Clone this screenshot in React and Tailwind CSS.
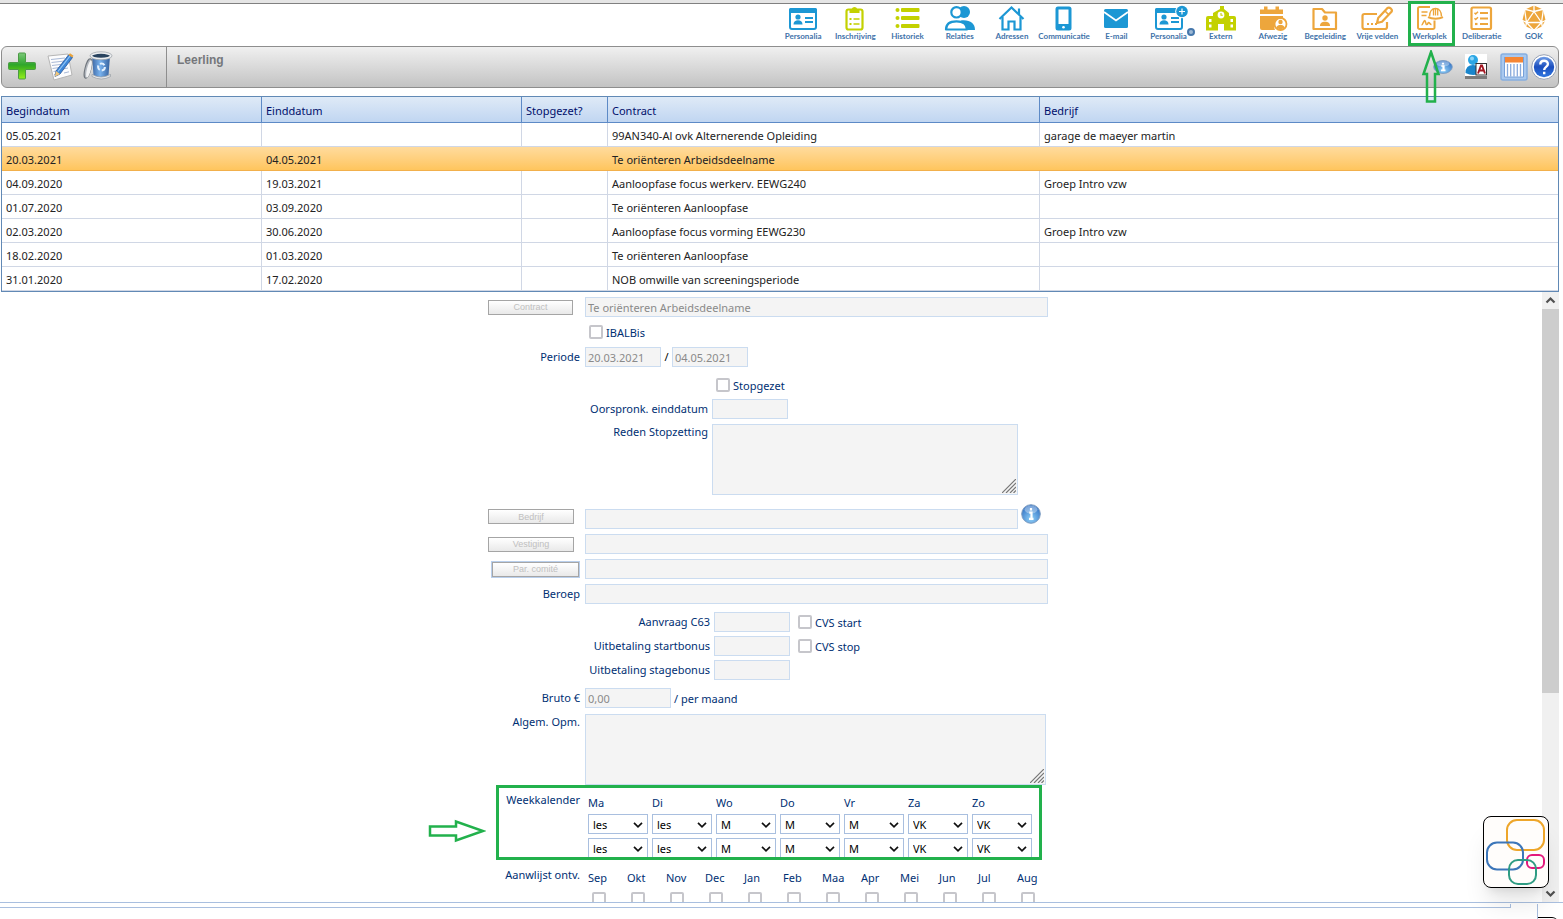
import React from "react";

const BLUE = "#1c97d4";
const LIME = "#c3d100";
const ORANGE = "#eda63c";

function CardIcon({ plus }) {
  return (
    <>
      <rect x="3" y="5" width="26" height="20" rx="2" fill="none" stroke={BLUE} strokeWidth="2" />
      <rect x="2" y="4" width="28" height="5" rx="1.5" fill={BLUE} />
      <circle cx="11" cy="13" r="2.6" fill={BLUE} />
      <path d="M6.5 20.5c0-3 2-4.2 4.500-4.200s4.500 1.200 4.500 4.200z" fill={BLUE} />
      <path d="M18 14h8M18 18h8" stroke={BLUE} strokeWidth="2" />
      {plus && (
        <>
          <circle cx="29" cy="7.500" r="6.800" fill="#fff" />
          <circle cx="29" cy="7.500" r="5.800" fill={BLUE} />
          <path d="M29 4.500v6M26 7.500h6" stroke="#fff" strokeWidth="1.200" />
        </>
      )}
    </>
  );
}

const ICONS = {
  card: <CardIcon />,
  cardPlus: <CardIcon plus />,
  clipboard: (
    <g fill="none" stroke={LIME} strokeWidth="2.200">
      <rect x="7.500" y="5.500" width="16" height="20" rx="2" />
      <path d="M10.500 5h2.300a2.800 2.800 0 0 1 5.400 0h2.300v4H10.500z" fill={LIME} stroke="none" />
      <path d="M14.500 15h6M14.500 20h6" strokeWidth="1.600" />
      <path d="M10.500 15h2M10.500 20h2" strokeWidth="2" />
    </g>
  ),
  list: (
    <g fill={LIME}>
      {[4, 12, 20].map((y) => (
        <g key={y}>
          <circle cx="5.500" cy={y + 2} r="2" />
          <rect x="9" y={y} width="18.500" height="4" rx="1" />
        </g>
      ))}
    </g>
  ),
  people: (
    <g>
      <g fill={BLUE}>
        <circle cx="20" cy="8" r="6" />
        <path d="M17 16.500c8.500-1 14 2.500 14 9.500h-12z" />
      </g>
      <g fill="#fff" stroke={BLUE} strokeWidth="2.200">
        <circle cx="12.500" cy="8.300" r="5.200" />
        <path d="M2 25.500c0-6 4.500-8.200 10.500-8.200S23 19.500 23 25.500z" strokeLinejoin="round" />
      </g>
    </g>
  ),
  home: (
    <g fill="none" stroke={BLUE} strokeWidth="2.200">
      <path d="M3.500 15 15.500 3.500 27.500 15M23 10V4.500" />
      <path d="M6.500 13v12.500H12.500v-8h6v8h6V13" />
    </g>
  ),
  phone: (
    <g>
      <rect x="7.500" y="2.500" width="16" height="24" rx="2.500" fill={BLUE} />
      <rect x="10.500" y="5.500" width="10" height="14.500" fill="#fff" />
      <circle cx="15.500" cy="23.200" r="1.300" fill="#fff" />
    </g>
  ),
  mail: (
    <g>
      <rect x="4" y="5" width="24" height="19" rx="1.500" fill={BLUE} />
      <path d="m4 8 12 8.500L28 8" fill="none" stroke="#fff" strokeWidth="1.800" />
    </g>
  ),
  school: (
    <g>
      <path d="M1 13a2 2 0 0 1 2-2h5V8l7-4V1h4v3l5 4v3h5a2 2 0 0 1 2 2v12.500H1z" fill={LIME} transform="translate(0 1)" />
      <circle cx="16" cy="11" r="3.400" fill="#fff" />
      <path d="M16 9v2.300h1.800" fill="none" stroke={LIME} strokeWidth="1.100" />
      <path d="M13 27v-7h6v7zM4 15h2.500v3H4zM4 20.500h2.500v3H4zM25.500 15H28v3h-2.500zM25.500 20.500H28v3h-2.500z" fill="#fff" />
    </g>
  ),
  calendarUser: (
    <g>
      <path d="M3 5.500h4V2.500h3.500v3h8v-3H22v3h4V10H3zM3 12h23v2.500a8 8 0 0 0-8 11.500H5a2 2 0 0 1-2-2z" fill={ORANGE} />
      <circle cx="23.500" cy="20" r="6" fill="#fff" stroke={ORANGE} strokeWidth="1.800" />
      <circle cx="23.500" cy="18" r="2.200" fill={ORANGE} />
      <path d="M19.500 23.500c.5-2 2-2.500 4-2.500s3.500.5 4 2.500c-2 2-6 2-8 0z" fill={ORANGE} />
    </g>
  ),
  folderUser: (
    <g>
      <path d="M4.500 25V5h8.500l3 3.500h11V25z" fill="none" stroke={ORANGE} strokeWidth="2.200" strokeLinejoin="round" />
      <circle cx="16" cy="14" r="2.700" fill={ORANGE} />
      <path d="M11 22c0-3.200 2-4.200 5-4.200s5 1 5 4.200z" fill={ORANGE} />
    </g>
  ),
  fieldPen: (
    <g fill="none" stroke={ORANGE} strokeWidth="2.200" strokeLinejoin="round">
      <path d="M16 10H3.500a2 2 0 0 0-2 2v11a2 2 0 0 0 2 2H24a2 2 0 0 0 2-2v-5" />
      <path d="m16 19 1.200-5L26.500 4c2-1.500 5.500 1.500 4 3.800L21 17.800z" />
      <path d="m23.500 6.500 4.300 4.300" strokeWidth="1.600" />
      <path d="M6 20h2M10 20h2M14 20h2" strokeWidth="2" />
    </g>
  ),
  workplace: (
    <g fill="none" stroke={ORANGE} strokeWidth="2">
      <path d="M16 3H5.500A1.500 1.500 0 0 0 4 4.500v19A1.500 1.500 0 0 0 5.500 25H19a1.500 1.500 0 0 0 1.500-1.500V16.500" />
      <path d="M7.500 8h6M7.500 11.500h5" strokeWidth="1.600" />
      <path d="M7.500 21c1.500 0 2-4.500 3.200-4.500s.6 4 2 4 1-2 2-2 1 2 2.800 2" strokeWidth="1.600" />
      <path d="M15.500 12.500C15.500 7.500 18 4.500 21.500 4.500s6 3 6 8" strokeWidth="1.500" />
      <path d="M19.500 5v6.500M21.500 4v7.500M23.700 5v6.500" strokeWidth="1.300" />
      <path d="M14 13.200c4 2 11 2 15 0" strokeWidth="1.900" />
    </g>
  ),
  checklist: (
    <g fill="none" stroke={ORANGE} strokeWidth="2.200">
      <rect x="5.500" y="3.500" width="19.500" height="21.500" rx="1.500" />
      <path d="M14 9h8M14 14.500h8M14 20h8" strokeWidth="2" />
      <path d="m8.500 8.800 1.200 1.200 2.300-2.300M8.500 14.300l1.200 1.200 2.300-2.300" strokeWidth="1.500" />
      <path d="M9 20h2.500" strokeWidth="2.200" />
    </g>
  ),
  polyhedron: (
    <g>
      <path d="M16 1.500 25 5.500 27.500 16 24 22.500 16 26 8 22.500 4.500 16 7 5.500z" fill={ORANGE} />
      <path d="M16 1v6.500L8.500 18.500h15L16 7.500 6 5M16 7.500 26 5M8.500 18.500 6.500 5M23.500 18.500l2-13.500M8.500 18.500 3.500 16M23.500 18.500l5-2.500M8.500 18.500l-1 5M23.500 18.500l1 5M8.500 18.500 16 26.500l7.500-8" fill="none" stroke="#fff" strokeWidth="1.300" />
    </g>
  ),
};

const NAV = [
  ["Personalia", "card"],
  ["Inschrijving", "clipboard"],
  ["Historiek", "list"],
  ["Relaties", "people"],
  ["Adressen", "home"],
  ["Communicatie", "phone"],
  ["E-mail", "mail"],
  ["Personalia", "cardPlus", true],
  ["Extern", "school"],
  ["Afwezig", "calendarUser"],
  ["Begeleiding", "folderUser"],
  ["Vrije velden", "fieldPen"],
  ["Werkplek", "workplace"],
  ["Deliberatie", "checklist"],
  ["GOK", "polyhedron"],
];

function TopNav() {
  return (
    <nav className="flex h-[42px] shrink-0 justify-end pr-[3px]">
      <div className="flex w-[783px]">
        {NAV.map(([label, icon, badge], i) => (
          <a key={i} href="#" className="relative flex min-w-0 flex-1 flex-col items-center">
            <svg viewBox="0 0 32 28" className="h-7 w-8 shrink-0 overflow-visible">{ICONS[icon]}</svg>
            <span className="relative font-[Lato,'Open_Sans',sans-serif] text-[8px] leading-[8px] font-bold whitespace-nowrap text-[#3f73aa]">
              {label}
              {badge && (
                <span className="absolute -top-1 -right-2 h-2 w-2 rounded-full border-2 border-[#4678ac] bg-[#9db8d4]" />
              )}
            </span>
            {label === "Werkplek" && (
              <>
                <span className="absolute -top-[3px] right-px bottom-0 left-[5px] border-[3px] border-[#22b14c]" />
                <svg viewBox="0 0 20 54" className="absolute top-[46px] left-[18px] z-10 h-[54px] w-5">
                  <path d="M10 2 17.500 24H14V51.500H6V24H2.500z" fill="none" stroke="#22b14c" strokeWidth="2.500" />
                </svg>
              </>
            )}
          </a>
        ))}
      </div>
    </nav>
  );
}

function InfoIcon({ className }) {
  return (
    <svg viewBox="0 0 20 20" className={className} preserveAspectRatio="none">
      <defs>
        <radialGradient id="info" cx="50%" cy="75%" r="70%">
          <stop offset="0" stopColor="#8fd0f8" />
          <stop offset="1" stopColor="#3272c4" />
        </radialGradient>
      </defs>
      <circle cx="10" cy="10" r="9.300" fill="url(#info)" stroke="#7d9cc0" />
      <ellipse cx="10" cy="5.500" rx="6.500" ry="4" fill="#fff" opacity=".35" />
      <path d="M10 4v2.500M8.300 8.700H10.500v5.800M8 14.800h4.500" stroke="#fff" strokeWidth="2.200" fill="none" />
    </svg>
  );
}

function Toolbar() {
  return (
    <header className="mr-1 ml-px flex h-[42px] shrink-0 items-stretch rounded-md border border-[#8e8e8e] bg-linear-to-b from-[#f0f0f0] to-[#c3c3c3]">
      <div className="flex w-[165px] items-center gap-2 border-r border-[#8e8e8e] pb-[2px] pl-[5px]">
        <button type="button" aria-label="Toevoegen">
          <svg viewBox="0 0 30 30" className="h-[30px] w-[30px]">
            <defs>
              <linearGradient id="add" x1="0" y1="0" x2="0" y2="1">
                <stop offset="0" stopColor="#7cc87a" />
                <stop offset=".45" stopColor="#2fa62c" />
                <stop offset=".55" stopColor="#3fb31f" />
                <stop offset="1" stopColor="#94f01c" />
              </linearGradient>
            </defs>
            <path d="M12.500 2h5q1 0 1 1v8.500h9q1 0 1 1v5q0 1-1 1h-9V27q0 1-1 1h-5q-1 0-1-1v-8.500h-9q-1 0-1-1v-5q0-1 1-1h9V3q0-1 1-1z" fill="url(#add)" stroke="#4b9b45" />
          </svg>
        </button>
        <button type="button" aria-label="Bewerken">
          <svg viewBox="0 0 30 30" className="h-[30px] w-[30px]">
            <path d="m3 5 20-2 4 21-18 5z" fill="#fcfcfd" stroke="#b5b5b5" />
            <path d="m6 8.500 14-1.500M6.500 11.500l13-1.500M7 14.500l10-1.200M7.500 17.500l7-1M8.500 20.500l4-.8M9 23.500l3-.6M19 22l5-1.200M18 18l5-1" stroke="#a9b9d6" />
            <path d="m11 20 12.500-16 4 2.500L15 23l-5 2.500z" fill="#3c86d8" stroke="#2a579b" strokeWidth=".8" />
            <path d="m13 20.500 12-15.500" stroke="#96c7f6" strokeWidth="1.200" />
            <path d="m11 20 4 3-5.200 2.700z" fill="#f0c67c" />
            <path d="m23.500 4 1.500-1.800 3.500 2.500-1.200 1.800z" fill="#e9a33a" />
          </svg>
        </button>
        <button type="button" aria-label="Verwijderen">
          <svg viewBox="0 0 30 30" className="h-[30px] w-[30px]">
            <defs>
              <linearGradient id="bin" x1="0" x2="1">
                <stop offset="0" stopColor="#3d68a5" />
                <stop offset=".45" stopColor="#78b2ee" />
                <stop offset="1" stopColor="#34609d" />
              </linearGradient>
            </defs>
            <path d="M9 5h18l-1.500 19q-7.500 4-15 0z" fill="url(#bin)" />
            <path d="M9 23.500q9 5 18.500 0v2q-9 5-18.500 0z" fill="#e5e8ec" stroke="#8a9097" strokeWidth=".6" />
            <ellipse cx="18" cy="4.800" rx="9.800" ry="3" fill="#29435f" stroke="#eceef0" strokeWidth="2" />
            <ellipse cx="18" cy="4.800" rx="11" ry="4" fill="none" stroke="#8a9097" strokeWidth=".6" />
            <circle cx="18.500" cy="16" r="3.400" fill="none" stroke="#e3f1ff" strokeWidth="2" strokeDasharray="5 2" />
            <ellipse cx="5" cy="17.500" rx="3" ry="10" transform="rotate(14 5 17.500)" fill="#b3b8bf" stroke="#6f757c" strokeWidth="1" />
            <ellipse cx="6" cy="18" rx="2" ry="9" transform="rotate(14 6 18)" fill="#f1f2f3" />
          </svg>
        </button>
      </div>
      <h1 className="flex-1 pt-[5px] pl-[10px] font-['Liberation_Sans',Arial,sans-serif] text-[12px] leading-4 font-bold text-[#75777b]">Leerling</h1>
      <div className="flex items-center">
        <button type="button" aria-label="Info" className="mr-[11px]">
          <InfoIcon className="h-[14px] w-5" />
        </button>
        <button type="button" aria-label="Leerlinggegevens" className="mr-3">
          <svg viewBox="0 0 24 26" className="h-[26px] w-6">
            <rect x="1" width="22" height="23" fill="#fff" />
            <rect x="1" y="22" width="22" height="3" fill="#7b7b7b" />
            <circle cx="9" cy="6" r="5" fill="#2ba6e4" />
            <path d="M1.500 19q0-8 7.500-8t7.500 8q-7 4-15 0z" fill="#1a86cc" />
            <circle cx="8" cy="4.500" r="2" fill="#8bd4f7" />
            <rect x="12" y="9.500" width="10.500" height="11.500" fill="#fff" stroke="#333" />
            <path d="m14 19.500 3-8h1l3 8M15.300 16.500h4.500" fill="none" stroke="#a31621" strokeWidth="1.900" />
          </svg>
        </button>
        <button type="button" aria-label="Kalender" className="mr-[3px]">
          <svg viewBox="0 0 28 28" className="h-7 w-7">
            <rect x="1" y="1" width="26" height="26" rx="2" fill="#a8c8ef" stroke="#86aee0" strokeWidth="1.500" />
            <rect x="4" y="4" width="20" height="20" fill="#fff" />
            <rect x="4" y="4" width="20" height="5.500" fill="#f58634" />
            <path d="M7.500 11v12.500M10.700 11v12.500M14 11v12.500M17.300 11v12.500M20.500 11v12.500" stroke="#8aabdc" strokeWidth="1.300" />
            <path d="M4.500 4v20h19V4" fill="none" stroke="#77a0d8" />
          </svg>
        </button>
        <button type="button" aria-label="Help" className="mr-px">
          <svg viewBox="0 0 26 26" className="h-[26px] w-[26px]">
            <defs>
              <linearGradient id="help" x1="0" y1="0" x2="0" y2="1">
                <stop offset="0" stopColor="#6d9be6" />
                <stop offset=".5" stopColor="#1c4fbe" />
                <stop offset="1" stopColor="#2f76e0" />
              </linearGradient>
            </defs>
            <circle cx="13" cy="13" r="12.300" fill="#fff" stroke="#96a0b4" />
            <circle cx="13" cy="13" r="10.200" fill="url(#help)" />
            <path d="M9.300 10.500c0-5 7.600-4.800 7.600-.5 0 3-3.700 2.800-3.700 6M13.200 17.800v2.500" fill="none" stroke="#fff" strokeWidth="2.400" />
          </svg>
        </button>
      </div>
    </header>
  );
}

const ROWS = [
  ["05.05.2021", "", "", "99AN340-Al ovk Alternerende Opleiding", "garage de maeyer martin"],
  ["20.03.2021", "04.05.2021", "", "Te oriënteren Arbeidsdeelname", ""],
  ["04.09.2020", "19.03.2021", "", "Aanloopfase focus werkerv. EEWG240", "Groep Intro vzw"],
  ["01.07.2020", "03.09.2020", "", "Te oriënteren Aanloopfase", ""],
  ["02.03.2020", "30.06.2020", "", "Aanloopfase focus vorming EEWG230", "Groep Intro vzw"],
  ["18.02.2020", "01.03.2020", "", "Te oriënteren Aanloopfase", ""],
  ["31.01.2020", "17.02.2020", "", "NOB omwille van screeningsperiode", ""],
];

function ContractTable() {
  return (
    <div className="mt-2 mr-1 ml-px shrink-0 border border-[#6189b5]">
      <table className="w-full table-fixed border-separate border-spacing-0 text-left">
        <colgroup>
          <col className="w-[260px]" />
          <col className="w-[260px]" />
          <col className="w-[86px]" />
          <col className="w-[432px]" />
          <col />
        </colgroup>
        <thead>
          <tr className="h-[26px] bg-linear-to-b from-[#dfeaf7] to-[#bfd5f1]">
            {["Begindatum", "Einddatum", "Stopgezet?", "Contract", "Bedrijf"].map((h) => (
              <th key={h} scope="col" className="border-r border-b border-[#5d8ac6] px-1 pt-[3px] pb-0 font-normal text-[#000f6b] last:border-r-0">{h}</th>
            ))}
          </tr>
        </thead>
        <tbody>
          {ROWS.map((row, i) => (
            <tr key={i} className={i === 1 ? "h-6 bg-linear-to-b from-[#ffdb9c] to-[#ffc459]" : "h-6 bg-white"}>
              {row.map((cell, j) => (
                <td key={j} className={i === 1 ? "border-b border-[#f2b04c] px-1 pt-[2px] pb-0" : "border-r border-b border-[#d0d7e5] px-1 pt-[2px] pb-0 last:border-r-0"}>{cell}</td>
              ))}
            </tr>
          ))}
        </tbody>
      </table>
    </div>
  );
}

function Field({ id, label, value = "", className }) {
  return (
    <input id={id} type="text" disabled defaultValue={value} aria-label={label} className={`h-5 border border-[#cbdcf0] bg-[#f4f4f4] px-[2px] text-[#8a8a8a] ${className}`} />
  );
}

function Memo({ id, className }) {
  return (
    <div className={`relative h-[71px] ${className}`}>
      <textarea id={id} disabled className="block h-full w-full resize-none border border-[#cbdcf0] bg-[#f4f4f4]" />
      <svg viewBox="0 0 14 14" className="absolute right-[2px] bottom-[2px] h-[14px] w-[14px]">
        <path d="M0 14 14 0M4 14 14 4M8 14l6-6M11.500 14l2.500-2.500" stroke="#777" strokeWidth="1.200" />
      </svg>
    </div>
  );
}

function Check({ id }) {
  return <input id={id} type="checkbox" className="h-[14px] w-[14px] shrink-0 appearance-none rounded-[2px] border-2 border-[#c6c6cb] bg-white" />;
}

function GrayButton({ children, className }) {
  return (
    <button type="button" disabled className={`h-[15px] border border-[#a5a5a5] bg-linear-to-b from-white to-[#e9e9e9] text-center font-['Liberation_Sans',Arial,sans-serif] text-[9px] leading-[12px] text-[#c0c0c0] ${className}`}>
      {children}
    </button>
  );
}

function Label({ htmlFor, children, className }) {
  return <label htmlFor={htmlFor} className={`shrink-0 text-right whitespace-nowrap ${className}`}>{children}</label>;
}

const DAYS = [["Ma", "les"], ["Di", "les"], ["Wo", "M"], ["Do", "M"], ["Vr", "M"], ["Za", "VK"], ["Zo", "VK"]];
const MONTHS = ["Sep", "Okt", "Nov", "Dec", "Jan", "Feb", "Maa", "Apr", "Mei", "Jun", "Jul", "Aug"];

function DaySelect({ value, label }) {
  return (
    <div className="relative h-5 w-[60px] shrink-0">
      <select aria-label={label} defaultValue={value} className="h-full w-full appearance-none border border-[#a9bfdf] bg-white pt-px pl-1 text-black">
        <option>les</option>
        <option>M</option>
        <option>VK</option>
      </select>
      <svg viewBox="0 0 10 6" className="pointer-events-none absolute top-[8px] right-[5px] h-[6px] w-[10px]">
        <path d="m1 .8 4 4 4-4" fill="none" stroke="#111" strokeWidth="1.700" />
      </svg>
    </div>
  );
}

function ContractForm() {
  return (
    <form className="mx-auto flex w-[568px] flex-col pt-[5px] pl-px text-[#002f73]">
      <div className="flex items-center">
        <GrayButton className="mr-3 w-[85px]">Contract</GrayButton>
        <Field label="Contract" value="Te oriënteren Arbeidsdeelname" className="w-[463px]" />
      </div>
      <div className="mt-[5px] flex h-5 items-center gap-[3px] pl-[101px]">
        <Check id="ibal" />
        <label htmlFor="ibal" className="pt-px">IBALBis</label>
      </div>
      <div className="mt-[5px] flex items-center">
        <Label htmlFor="from" className="mr-[5px] w-[92px]">Periode</Label>
        <Field id="from" value="20.03.2021" className="w-[76px]" />
        <span className="w-[11px] text-center text-black">/</span>
        <Field label="Einddatum periode" value="04.05.2021" className="w-[76px]" />
      </div>
      <div className="mt-2 flex h-5 items-center gap-[3px] pl-[228px]">
        <Check id="stop" />
        <label htmlFor="stop" className="pt-px">Stopgezet</label>
      </div>
      <div className="mt-1 flex items-center">
        <Label htmlFor="orig" className="mr-1 w-[220px]">Oorspronk. einddatum</Label>
        <Field id="orig" className="w-[76px]" />
      </div>
      <div className="mt-[5px] flex items-start">
        <Label htmlFor="reason" className="mr-1 w-[220px]">Reden Stopzetting</Label>
        <Memo id="reason" className="w-[306px]" />
      </div>
      <div className="mt-[14px] flex items-center">
        <GrayButton className="mr-[11px] w-[86px] self-start">Bedrijf</GrayButton>
        <Field label="Bedrijf" className="w-[433px]" />
        <button type="button" aria-label="Info bedrijf" className="-mt-[11px] -mb-px ml-[3px]">
          <InfoIcon className="h-5 w-5" />
        </button>
      </div>
      <div className="mt-[5px] flex items-center">
        <GrayButton className="mr-[11px] w-[86px]">Vestiging</GrayButton>
        <Field label="Vestiging" className="w-[463px]" />
      </div>
      <div className="mt-[5px] flex items-center pl-1">
        <GrayButton className="mr-[6px] w-[87px] outline outline-[#b9cfec]">Par. comité</GrayButton>
        <Field label="Par. comité" className="w-[463px]" />
      </div>
      <div className="mt-[5px] flex items-center">
        <Label htmlFor="job" className="mr-[5px] w-[92px]">Beroep</Label>
        <Field id="job" className="w-[463px]" />
      </div>
      <div className="mt-2 flex flex-col gap-1">
        {[["c63", "Aanvraag C63", "CVS start"], ["sb", "Uitbetaling startbonus", "CVS stop"], ["stb", "Uitbetaling stagebonus"]].map(([id, label, check]) => (
          <div key={id} className="flex items-center">
            <Label htmlFor={id} className="mr-1 w-[222px]">{label}</Label>
            <Field id={id} className="w-[76px]" />
            {check && (
              <span className="ml-2 flex items-center gap-[3px]">
                <Check id={`${id}-cvs`} />
                <label htmlFor={`${id}-cvs`} className="pt-px">{check}</label>
              </span>
            )}
          </div>
        ))}
      </div>
      <div className="mt-2 flex items-center">
        <Label htmlFor="gross" className="mr-[5px] w-[92px]">Bruto €</Label>
        <Field id="gross" value="0,00" className="w-[86px]" />
        <span className="ml-[3px] pt-px">/ per maand</span>
      </div>
      <div className="mt-[6px] flex items-start">
        <Label htmlFor="notes" className="mr-[5px] w-[92px]">Algem. Opm.</Label>
        <Memo id="notes" className="w-[461px]" />
      </div>
      <div className="ml-2 flex h-[75px] w-[546px] overflow-hidden border-[3px] border-[#22b14c] pt-1">
        <span className="mr-2 w-[81px] shrink-0 text-right">Weekkalender</span>
        <div className="flex gap-1 pt-[3px]">
          {DAYS.map(([day, value]) => (
            <div key={day} className="flex flex-col gap-1">
              <span className="h-[15px] shrink-0">{day}</span>
              <DaySelect label={`${day} voormiddag`} value={value} />
              <DaySelect label={`${day} namiddag`} value={value} />
            </div>
          ))}
        </div>
      </div>
      <div className="mt-[7px] flex">
        <span className="mr-2 w-[92px] shrink-0 text-right">Aanwlijst ontv.</span>
        <div className="flex shrink-0 pt-[3px]">
          {MONTHS.map((m) => (
            <div key={m} className="flex w-[39px] shrink-0 flex-col gap-[6px]">
              <label htmlFor={m}>{m}</label>
              <span className="flex pl-1"><Check id={m} /></span>
            </div>
          ))}
        </div>
      </div>
    </form>
  );
}

function ScrollArrow({ down }) {
  return (
    <svg viewBox="0 0 17 17" className="h-[17px] w-[17px] shrink-0">
      <path d={down ? "M4.500 6.500 8.500 10.500l4-4" : "M4.500 10.500 8.500 6.500l4 4"} fill="none" stroke="#505050" strokeWidth="2.200" />
    </svg>
  );
}

export default function App() {
  return (
    <div className="flex h-screen flex-col overflow-hidden bg-white font-['Noto_Sans','Open_Sans',sans-serif] text-[11px] leading-4 text-[#222]">
      <div className="h-1 shrink-0 border-b border-[#808080] bg-[#e5e5e5]" />
      <TopNav />
      <Toolbar />
      <ContractTable />
      <main className="relative mr-1 flex min-h-0 flex-1">
        <div className="min-w-0 flex-1 overflow-hidden">
          <ContractForm />
        </div>
        <div className="flex w-[17px] flex-col bg-[#f0f0f0]">
          <ScrollArrow />
          <div className="flex-[2] bg-[#cdcdcd]" />
          <div className="flex-1" />
          <ScrollArrow down />
        </div>
        <svg viewBox="0 0 58 24" className="absolute top-[527px] left-[428px] h-6 w-[58px]">
          <path d="M2 7.500H28V2.500L55 12 28 21.500V16.500H2z" fill="none" stroke="#22b14c" strokeWidth="2.500" />
        </svg>
        <button type="button" aria-label="Menu" className="absolute right-[10px] bottom-[14px] h-[72px] w-[66px] rounded-lg border border-black bg-[#fffdfb] shadow-xl">
          <svg viewBox="0 0 64 70" className="h-full w-full" fill="none" strokeWidth="2">
            <rect x="23" y="3" width="37" height="30" rx="10" stroke="#eea62a" />
            <rect x="43" y="38" width="17" height="13" rx="5" stroke="#e3197d" />
            <rect x="3" y="25.500" width="36" height="27" rx="10" stroke="#3c76b9" />
            <rect x="25" y="43" width="27" height="24" rx="9" stroke="#2f9c83" />
          </svg>
        </button>
      </main>
      <footer className="flex h-[17px] shrink-0 border-t border-[#a9bfdf]">
        <div className="mr-[26px] flex-1">
          <div className="mt-px h-1 border-r border-b border-[#a9bfdf]" />
        </div>
        <div className="mt-px w-[26px] border-l border-[#a9bfdf] pt-[13px]">
          <div className="h-2 w-5 rounded-tr-md border-t border-black" />
        </div>
      </footer>
    </div>
  );
}
